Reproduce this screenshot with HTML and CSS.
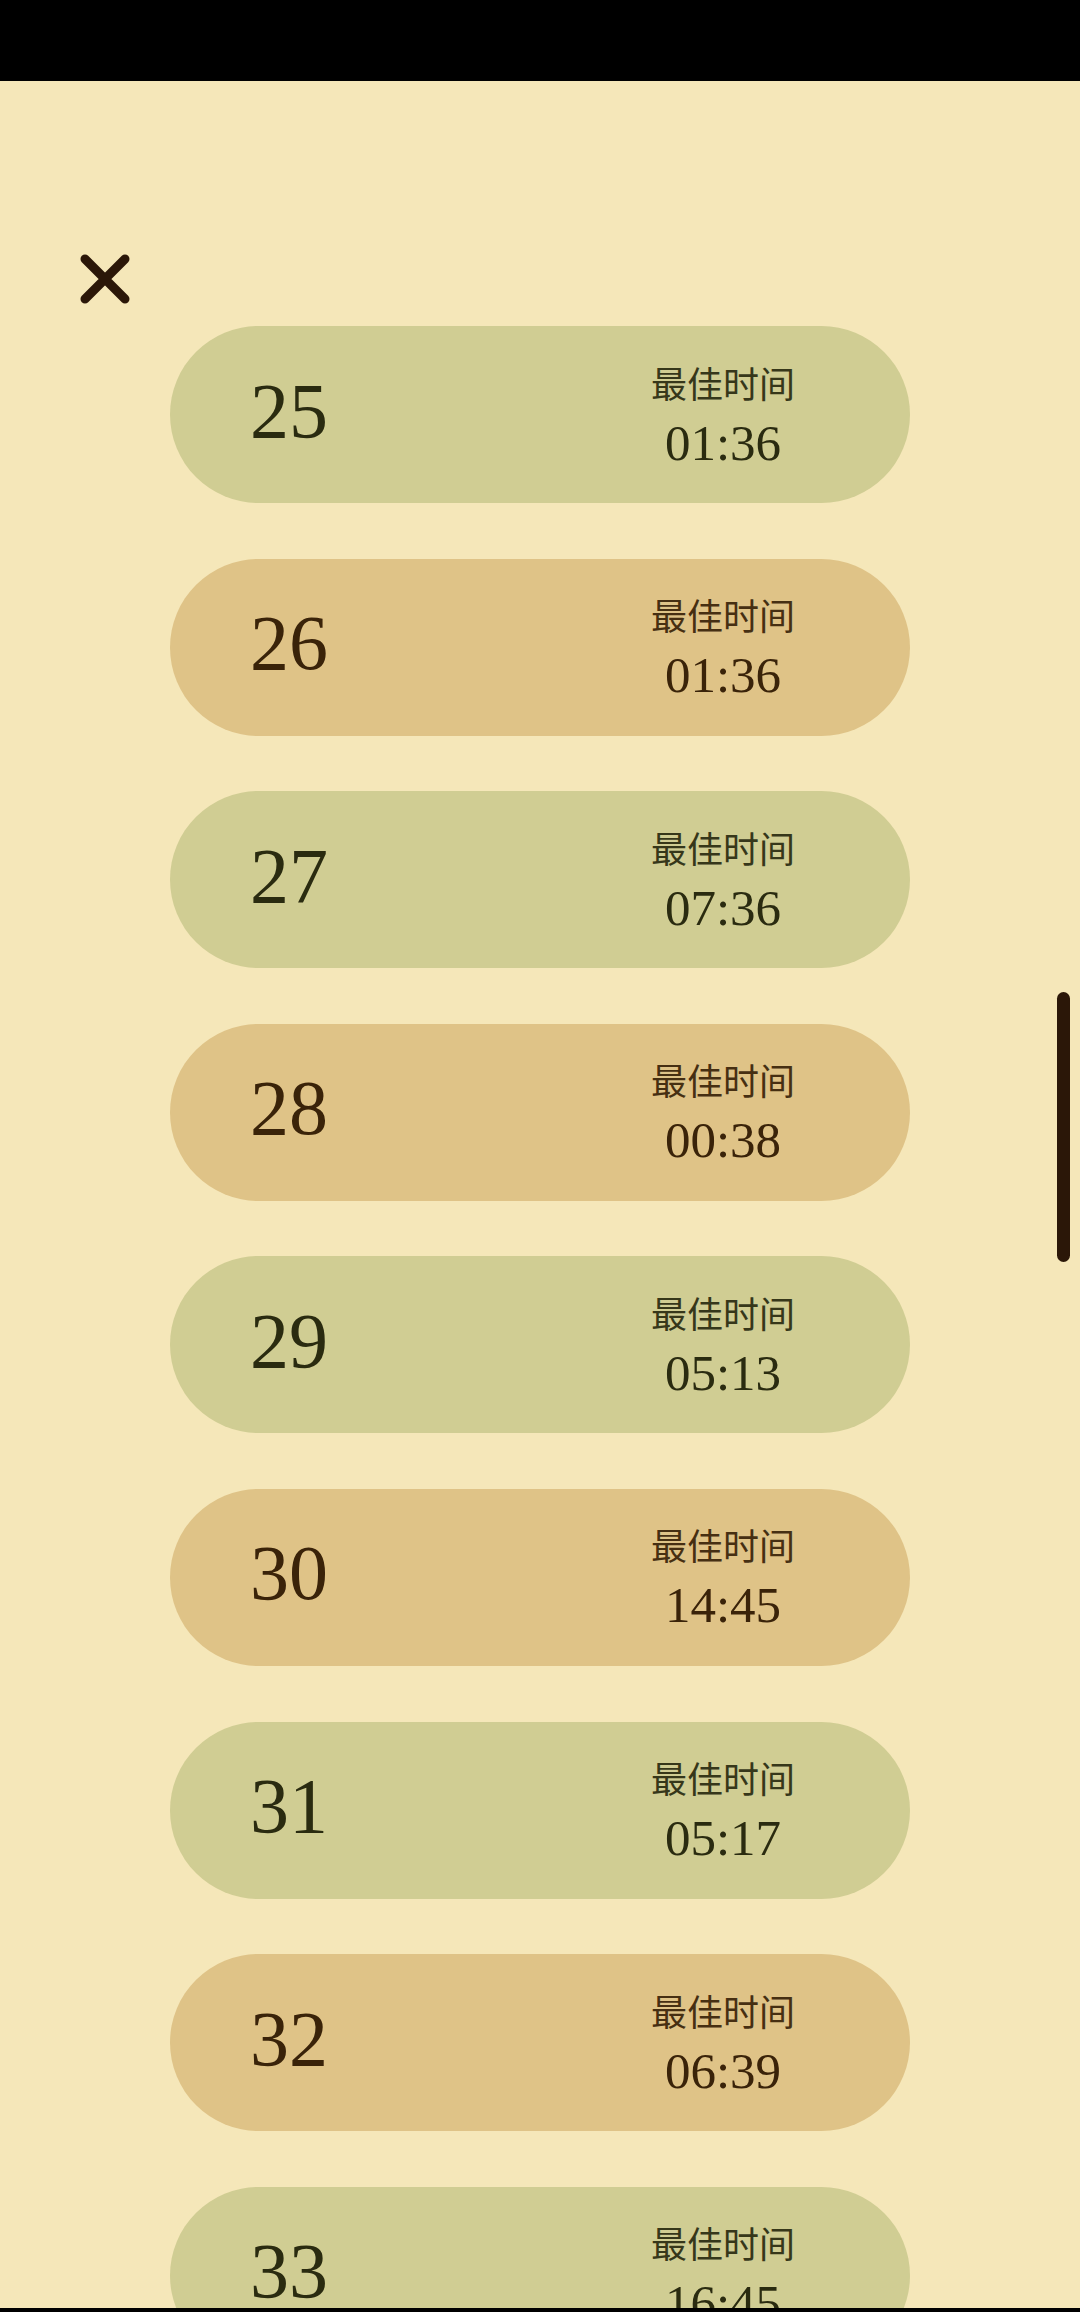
FILE: index.html
```html
<!DOCTYPE html>
<html lang="zh">
<head>
<meta charset="utf-8">
<title>最佳时间</title>
<link rel="stylesheet" href="styles.css">
</head>
<body>
<div class="phone">
  <div class="status-bar"></div>
  <main class="screen">
    <header class="topbar">
      <button class="close" aria-label="关闭">
        <svg width="56" height="56" viewBox="0 0 56 56"><path d="M8 8 L48 48 M48 8 L8 48" stroke="#2b1708" stroke-width="9" stroke-linecap="round" fill="none"/></svg>
      </button>
    </header>
    <ul class="levels">
      <li class="level green"><span class="num">25</span><div class="best"><span class="label">最佳时间</span><span class="time">01:36</span></div></li>
      <li class="level tan"><span class="num">26</span><div class="best"><span class="label">最佳时间</span><span class="time">01:36</span></div></li>
      <li class="level green"><span class="num">27</span><div class="best"><span class="label">最佳时间</span><span class="time">07:36</span></div></li>
      <li class="level tan"><span class="num">28</span><div class="best"><span class="label">最佳时间</span><span class="time">00:38</span></div></li>
      <li class="level green"><span class="num">29</span><div class="best"><span class="label">最佳时间</span><span class="time">05:13</span></div></li>
      <li class="level tan"><span class="num">30</span><div class="best"><span class="label">最佳时间</span><span class="time">14:45</span></div></li>
      <li class="level green"><span class="num">31</span><div class="best"><span class="label">最佳时间</span><span class="time">05:17</span></div></li>
      <li class="level tan"><span class="num">32</span><div class="best"><span class="label">最佳时间</span><span class="time">06:39</span></div></li>
      <li class="level green"><span class="num">33</span><div class="best"><span class="label">最佳时间</span><span class="time">16:45</span></div></li>
    </ul>
    <div class="scrollbar"></div>
  </main>
  <div class="nav-bar"></div>
</div>
</body>
</html>
```
FILE: styles.css
```css
* { box-sizing: border-box; }
html, body {
  margin: 0;
  padding: 0;
  width: 1080px;
  height: 2312px;
  overflow: hidden;
  background: #f5e7b9;
}
.phone {
  width: 1080px;
  height: 2312px;
  display: flex;
  flex-direction: column;
}
.status-bar {
  height: 81px;
  background: #000;
  flex: none;
}
.nav-bar {
  height: 4px;
  background: #000;
  flex: none;
}
.screen {
  flex: 1;
  position: relative;
  overflow: hidden;
  background: #f5e7b9;
}
.topbar {
  padding: 170px 0 0 77px;
  height: 245px;
}
.close {
  display: block;
  width: 56px;
  height: 56px;
  padding: 0;
  border: 0;
  background: none;
}
.close svg { display: block; }
.levels {
  list-style: none;
  margin: 0;
  padding: 0 0 0 170px;
  display: flex;
  flex-direction: column;
  gap: 55.6px;
}
.level {
  width: 740px;
  height: 177px;
  border-radius: 88.5px;
  display: flex;
  align-items: center;
  padding: 0 97px 0 80px;
  flex: none;
}
.green { background: #d0cd93; color: #2a2b10; }
.tan { background: #dfc387; color: #3a2309; }
.num {
  font-family: "Liberation Serif", serif;
  font-size: 78px;
  line-height: 78px;
  padding-bottom: 8px;
}
.best {
  margin-left: auto;
  width: 180px;
  display: flex;
  flex-direction: column;
  align-items: center;
  gap: 16px;
}
.label {
  font-family: "Noto Sans CJK SC", "Noto Sans", sans-serif;
  font-size: 36px;
  line-height: 40px;
  opacity: 0.92;
}
.time {
  font-family: "Liberation Serif", serif;
  font-size: 51px;
  line-height: 50px;
}
.scrollbar {
  position: absolute;
  right: 10px;
  top: 911px;
  width: 13px;
  height: 270px;
  border-radius: 7px;
  background: #2b1708;
}
```
